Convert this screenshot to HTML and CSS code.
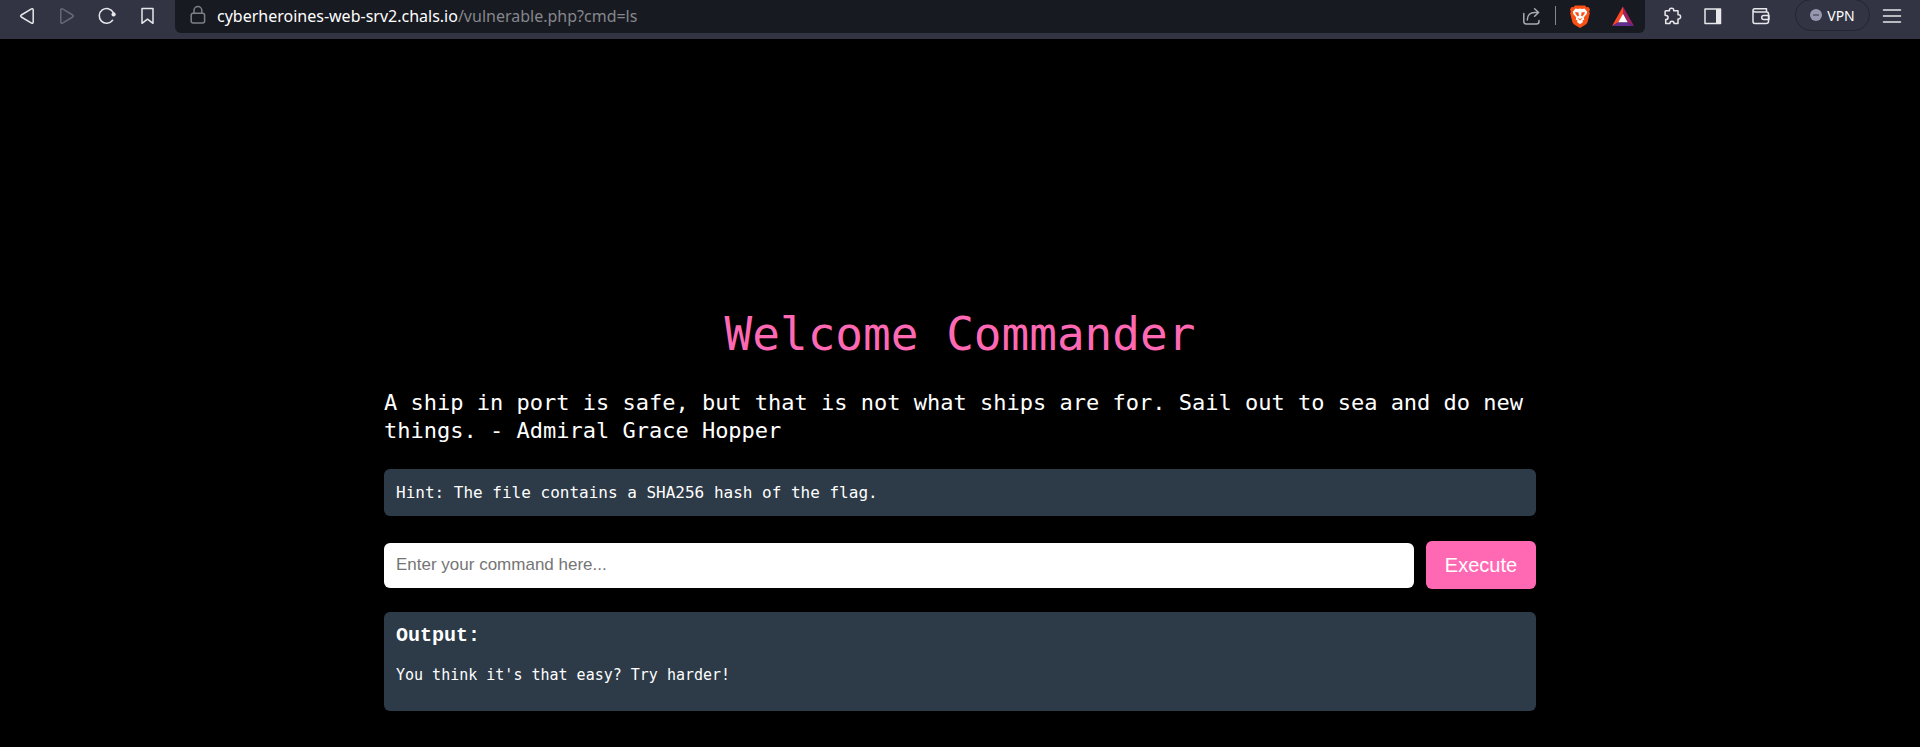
FILE: index.html
```html
<!DOCTYPE html>
<html lang="en">
<head>
<meta charset="utf-8">
<title>Welcome Commander</title>
<link rel="stylesheet" href="styles.css">
</head>
<body>
<header class="toolbar">
  <nav class="nav-buttons" aria-label="Navigation">
    <button class="icon-button" aria-label="Back"><svg class="icon" viewBox="0 0 24 24"><path d="M16.5 4.9Q18.2 4.2 18.2 6V18Q18.2 19.8 16.5 19.1L6.3 13Q5 12 6.3 11Z"/></svg></button>
    <button class="icon-button icon-button-off" aria-label="Forward" disabled><svg class="icon" viewBox="0 0 24 24"><path d="M7.5 4.9Q5.8 4.2 5.8 6V18Q5.8 19.8 7.5 19.1L17.7 13Q19 12 17.7 11Z"/></svg></button>
    <button class="icon-button" aria-label="Reload"><svg class="icon" viewBox="0 0 24 24"><path d="M17.6 16.3A7.4 7.4 0 1 1 18.2 8.4"/><circle class="solid" cx="18.6" cy="10.4" r="2.1"/></svg></button>
    <button class="icon-button" aria-label="Bookmark"><svg class="icon" viewBox="0 0 24 24"><path d="M7 4.5H18V19.3L12.5 15.2L7 19.3Z"/></svg></button>
  </nav>
  <div class="address">
    <svg class="icon icon-lock" viewBox="0 0 24 24"><rect x="5.2" y="10.2" width="13.4" height="9.8" rx="2"/><path d="M8 10V7.500a3.900 3.900 0 0 1 7.800 0v2.500"/></svg>
    <div class="url"><span class="url-host">cyberheroines-web-srv2.chals.io</span>/vulnerable.php?cmd=ls</div>
    <button class="icon-button icon-button-share" aria-label="Share"><svg class="icon" viewBox="0 0 24 24"><path d="M3.8 9.5V17.5Q3.8 20 6.3 20H16.5Q19 20 19 17.5V16.5M7.3 16C7.3 11 10.5 8.5 14.5 8.5H18.5M14.6 4.7L18.6 8.5L14.6 12.3"/></svg></button>
    <span class="divider"></span>
    <button class="icon-button icon-button-shields" aria-label="Brave Shields"><svg class="icon-color" viewBox="0 0 24 26"><path fill="#fb4f14" d="M7 2.4H17L18.6 4.2L20.5 4L22 6.6L21.2 8.5L21.8 10.3L19.7 18.8Q19.2 20.5 17.8 21.5L12 25L6.2 21.5Q4.8 20.5 4.3 18.8L2.2 10.3L2.8 8.5L2 6.6L3.5 4L5.4 4.2Z"/><path fill="#fff" d="M7.5 5.5L10 6L12 5.5L14 6L16.5 5.5L19.2 8.8L18.7 11L15.7 14.6L16.3 16.5L14.5 17.5L15 19L12 21.3L9 19L9.5 17.5L7.7 16.5L8.3 14.6L5.300 11L4.800 8.800Z"/><path fill="#fb4f14" d="M7.200 8.900L10.500 9.600L10.900 12.800L9.800 13.400L7.600 11ZM16.800 8.900L13.500 9.600L13.100 12.800L14.200 13.400L16.400 11ZM9.300 14.800L12 16L14.700 14.800L12 17.500Z"/></svg></button>
    <button class="icon-button" aria-label="Brave Rewards"><svg class="icon-color" viewBox="0 0 24 26"><path fill="#ff4724" d="M12 3.5L1 23L7.5 19.3L12 11Z"/><path fill="#9e1f63" d="M12 3.5L23 23L16.5 19.3L12 11Z"/><path fill="#662d91" d="M1 23H23L16.5 19.3H7.5Z"/><path fill="#fff" d="M12 10.8L7.3 19.3H16.7Z"/></svg></button>
  </div>
  <div class="tools">
    <button class="icon-button" aria-label="Extensions"><svg class="icon" viewBox="0 0 24 24"><path d="M5 6.800H8.500Q8 4.200 10.500 4.200T12.700 6.800H17V10.800Q19.600 10.500 19.600 12.800T17 15V19.600H13.100Q13.100 17.200 11 17.200T8.900 19.600H4.700V15.500Q7.100 15.500 7.100 13.400T4.100 11.200V7.600Q4.100 6.800 5 6.800Z"/></svg></button>
    <button class="icon-button" aria-label="Sidebar"><svg class="icon" viewBox="0 0 24 24"><rect x="4" y="5" width="15.5" height="14.5"/><path class="solid" d="M15 5H20V19.5H15Z"/></svg></button>
    <button class="icon-button icon-button-wallet" aria-label="Wallet"><svg class="icon" viewBox="0 0 24 24"><path d="M17.500 8V4.800H6Q4 4.800 4 6.500V17.500Q4 19.500 6 19.500H17Q19.500 19.500 19.500 17.500V10Q19.500 8 17.500 8H6.500Q4 8 4 6.500M20 11.500H14.700Q12.700 11.500 12.700 13.500T14.700 15.500H20Z"/></svg></button>
    <button class="vpn"><svg class="vpn-dot" viewBox="0 0 12 12"><circle cx="6" cy="6" r="6"/><path d="M3 6H9"/></svg>VPN</button>
    <button class="icon-button" aria-label="Menu"><svg class="icon" viewBox="0 0 24 24"><path d="M3.500 6H20.500M3.500 12H20.500M3.500 18H20.500"/></svg></button>
  </div>
</header>
<main class="content">
  <h1 class="title">Welcome Commander</h1>
  <p class="quote">A ship in port is safe, but that is not what ships are for. Sail out to sea and do new things. - Admiral Grace Hopper</p>
  <p class="panel hint">Hint: The file contains a SHA256 hash of the flag.</p>
  <form class="command">
    <input class="command-input" type="text" name="cmd" aria-label="Command" placeholder="Enter your command here...">
    <button class="command-submit" type="button">Execute</button>
  </form>
  <section class="panel output">
    <h2 class="output-title">Output:</h2>
    <pre class="output-text">You think it's that easy? Try harder!</pre>
  </section>
</main>
</body>
</html>
```

FILE: styles.css
```css
* {
  box-sizing: border-box;
}

body {
  margin: 0;
  background: #000;
  color: #fff;
  font-family: "DejaVu Sans Mono", monospace;
}

button {
  border: 0;
  padding: 0;
  background: none;
  color: inherit;
}

/* Browser toolbar */
.toolbar {
  display: flex;
  height: 39px;
  padding: 0 8px 6px 7px;
  background: #323443;
  color: #e8e8ec;
}

.nav-buttons,
.tools {
  display: flex;
  align-items: flex-start;
}

.nav-buttons {
  margin-right: 8px;
}

.tools {
  padding-left: 8px;
}

.icon-button {
  display: flex;
  flex: none;
  align-items: center;
  justify-content: center;
  width: 40px;
  height: 31px;
}

.icon-button-off {
  color: #666877;
}

.icon-button-share {
  color: #a9abb3;
}

.icon-button-shields {
  margin-right: 3px;
}

.icon-button-wallet {
  margin: 0 14px 0 8px;
}

.icon {
  flex: none;
  width: 24px;
  height: 24px;
  fill: none;
  stroke: currentColor;
  stroke-width: 1.5;
  stroke-linejoin: round;
  stroke-linecap: round;
}

.icon .solid {
  fill: currentColor;
  stroke: none;
}

.icon-color {
  width: 24px;
  height: 26px;
}

.address {
  display: flex;
  flex: 1;
  align-items: flex-start;
  padding: 0 2px 0 11px;
  border-radius: 0 0 6px 6px;
  background: #181a21;
}

.icon-lock {
  margin: 3px 7px 0 0;
  color: #7d8088;
}

.url {
  flex: 1;
  color: #85878c;
  font-family: "Noto Sans", sans-serif;
  font-size: 16px;
  line-height: 32px;
  white-space: nowrap;
}

.url-host {
  color: #fff;
}

.divider {
  width: 1px;
  height: 19px;
  margin: 6px 4px 0 3px;
  background: #85878c;
}

.vpn {
  display: flex;
  align-items: center;
  justify-content: center;
  gap: 5px;
  width: 75px;
  height: 32px;
  margin: -1px 2px 0 0;
  border: 1px solid #232530;
  border-radius: 16px;
  color: #fff;
  font-family: "Noto Sans", sans-serif;
  font-size: 14px;
}

.vpn-dot {
  width: 12px;
  height: 12px;
  fill: #9698b0;
  stroke: #323443;
}

.vpn-dot circle {
  stroke: none;
}

/* Page */
.content {
  width: 60%;
  margin: 0 auto;
  padding: 265px 0 36px;
}

.title {
  margin: 0 0 25px;
  color: #ff69b4;
  font-size: 46px;
  font-weight: 400;
  line-height: 60px;
  text-align: center;
}

.quote {
  margin: 0 0 24px;
  font-size: 22px;
  line-height: 28px;
}

.panel {
  border-radius: 6px;
  background: #2d3a47;
}

.hint {
  margin: 0 0 25px;
  padding: 12px;
  font-size: 16px;
  line-height: 23px;
}

.command {
  display: flex;
  align-items: center;
  gap: 12px;
  margin-bottom: 23px;
}

.command-input {
  flex: 1;
  min-width: 0;
  height: 45px;
  padding: 0 12px;
  border: 0;
  border-radius: 6px;
  background: #fff;
  font-family: "Liberation Sans", sans-serif;
  font-size: 17px;
}

.command-input::placeholder {
  color: #757575;
}

.command-submit {
  width: 110px;
  height: 48px;
  border-radius: 6px;
  background: #ff69b4;
  color: #fff;
  font-family: "Liberation Sans", sans-serif;
  font-size: 20px;
}

.output {
  padding: 12px 12px 25px;
}

.output-title {
  margin: 0 0 16px;
  font-family: "Liberation Mono", monospace;
  font-size: 20px;
  line-height: 24px;
}

.output-text {
  margin: 0;
  font-family: "DejaVu Sans Mono", monospace;
  font-size: 15px;
  line-height: 22px;
}
```
